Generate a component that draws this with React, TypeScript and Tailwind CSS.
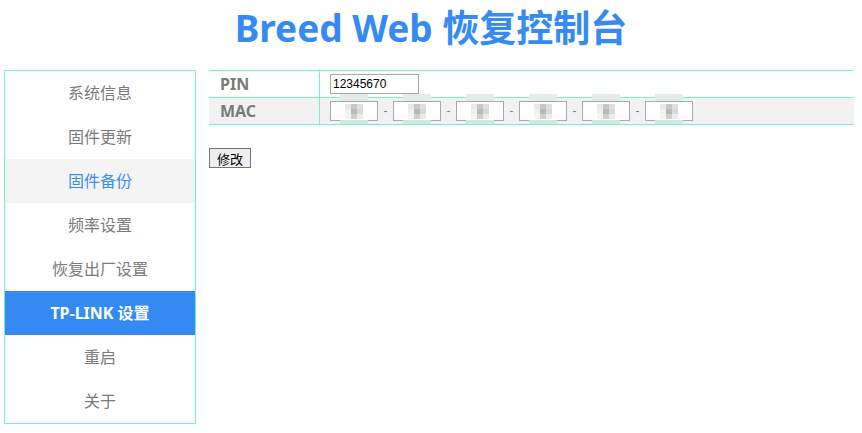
import React from "react";

const menu = ["系统信息", "固件更新", "固件备份", "频率设置", "恢复出厂设置", "TP-LINK 设置", "重启", "关于"];

const pix = [
  ["#e8e8e8", "#c8c8c8", "#e0e0e0"],
  ["#f0f0f0", "#b8b8b8", "#d8d8d8"],
  ["#f4f4f4", "#cfcfcf", "#ececec"],
];

function MacBox() {
  return (
    <div className="relative h-[20px] w-[48px] border border-[#a9a9a9] bg-white">
      <div className="absolute left-[9px] top-[-8px] h-[7px] w-[28px] bg-[#e2ece8]" />
      <div className="absolute left-[14px] top-[2px] grid grid-cols-3">
        {pix.flat().map((c, i) => (
          <div key={i} className="h-[5px] w-[6px]" style={{ backgroundColor: c }} />
        ))}
      </div>
      <div className="absolute left-[9px] bottom-[-4px] h-[4px] w-[28px] bg-[#cfeadf]" />
    </div>
  );
}

export default function App() {
  return (
    <div className="h-[433px] w-[862px] bg-white font-['Noto_Sans','Noto_Sans_CJK_SC',sans-serif]">
      <div className="flex h-[70px] items-start justify-center pt-[6px]">
        <h1 className="text-[37px] font-bold leading-[44px] text-[#358bf3]">Breed Web 恢复控制台</h1>
      </div>
      <div className="flex items-start pl-[4px]">
        <div className="w-[192px] border border-[#6ff5cb]">
          {menu.map((m, i) => (
            <div
              key={m}
              className={
                "flex h-[44px] items-center justify-center text-[16px] " +
                (i === 2
                  ? "bg-[#f4f4f4] text-[#3a8ef0]"
                  : i === 5
                  ? "bg-[#348af2] font-bold text-white"
                  : "text-[#7b7b7b]")
              }
            >
              {m}
            </div>
          ))}
        </div>
        <div className="ml-[13px] w-[645px]">
          <div className="border-y border-[#6ff5cb]">
            <div className="flex h-[26px]">
              <div className="flex w-[111px] items-center border-r border-[#6ff5cb] pl-[11px] text-[16px] font-bold text-[#7a7a7a]">
                PIN
              </div>
              <div className="flex items-center pl-[10px]">
                <div className="flex h-[20px] w-[89px] items-center border border-[#a9a9a9] bg-white pl-[2px] font-['Liberation_Sans',sans-serif] text-[12px] text-black">
                  12345670
                </div>
              </div>
            </div>
            <div className="flex h-[27px] border-t border-[#6ff5cb] bg-[#f3f2f0]">
              <div className="flex w-[111px] items-center border-r border-[#6ff5cb] pl-[11px] text-[16px] font-bold text-[#7a7a7a]">
                MAC
              </div>
              <div className="flex items-center pl-[10px] font-['Liberation_Sans',sans-serif] text-[12px] text-[#808080]">
                {[0, 1, 2, 3, 4, 5].map((i) => (
                  <React.Fragment key={i}>
                    {i > 0 && <span className="w-[15px] text-center">-</span>}
                    <MacBox />
                  </React.Fragment>
                ))}
              </div>
            </div>
          </div>
          <button className="mt-[23px] flex h-[20px] w-[42px] items-center justify-center border border-[#767676] bg-[#efefef] font-['Noto_Sans_CJK_SC',sans-serif] text-[13px] leading-none text-black">
            修改
          </button>
        </div>
      </div>
    </div>
  );
}
